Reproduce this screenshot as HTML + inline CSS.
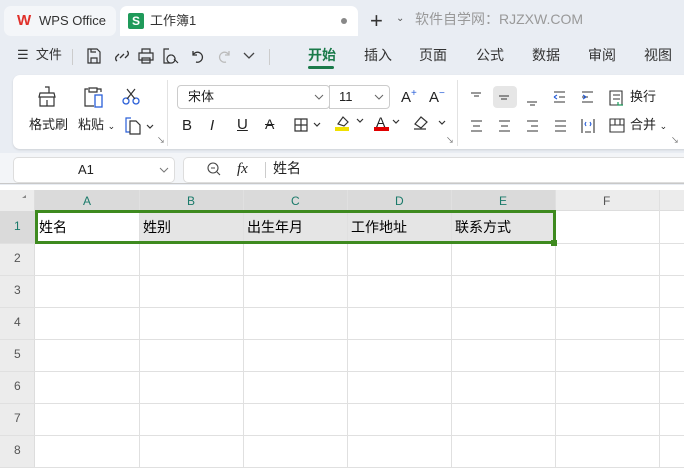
<!DOCTYPE html>
<html><head><meta charset="utf-8"><style>
*{margin:0;padding:0;box-sizing:border-box}
body{width:684px;height:468px;overflow:hidden;background:#e9edf3;font-family:"Liberation Sans","Noto Sans CJK SC",sans-serif;position:relative;color:#222}
.a{position:absolute}
.t{font-size:13px;white-space:nowrap;line-height:1.2}
svg{position:absolute;overflow:visible}
</style></head><body>
<!-- tabs -->
<div class="a" style="left:4px;top:6px;width:112px;height:30px;background:#f4f6f9;border-radius:7px"></div>
<div class="a t" style="left:17px;top:12px;color:#e0302a;font-weight:bold;font-size:15px">W</div>
<div class="a t" style="left:39px;top:13px;font-size:13px;color:#333">WPS Office</div>
<div class="a" style="left:120px;top:6px;width:238px;height:30px;background:#fff;border-radius:7px 7px 0 0"></div>
<div class="a" style="left:128px;top:13px;width:16px;height:16px;background:#1f9a5a;border-radius:2px;color:#fff;font-size:12px;font-weight:bold;text-align:center;line-height:16px">S</div>
<div class="a t" style="left:150px;top:13px;color:#333">工作簿1</div>
<div class="a" style="left:341px;top:18px;width:6px;height:6px;border-radius:3px;background:#888"></div>
<div class="a t" style="left:370px;top:8px;font-size:22px;color:#333;font-weight:300">+</div>
<div class="a t" style="left:396px;top:13px;font-size:10px;color:#555">⌄</div>
<div class="a t" style="left:415px;top:11px;font-size:14px;color:#999">软件自学网：RJZXW.COM</div>
<!-- menu row -->
<div class="a t" style="left:17px;top:47px;color:#333">☰&nbsp; 文件</div>
<div class="a" style="left:72px;top:49px;width:1px;height:16px;background:#ccc"></div>
<svg style="left:86px;top:48px" width="16" height="16"><path d="M2 1h9l3 3v11H2z M5 15v-5h6v5 M5 1v3h5" fill="none" stroke="#333" stroke-width="1.2"/></svg>
<svg style="left:114px;top:48px" width="16" height="16"><path d="M3 13a3 3 0 0 1 0-5l2-2 M13 3a3 3 0 0 1 0 5l-2 2 M6 10l4-4" fill="none" stroke="#333" stroke-width="1.3"/></svg>
<svg style="left:138px;top:48px" width="16" height="16"><path d="M4 5V1h8v4 M1 5h14v7H1z M4 10h8v5H4z" fill="none" stroke="#333" stroke-width="1.2"/></svg>
<svg style="left:163px;top:48px" width="16" height="16"><path d="M6 1H1v14h6 M8 7a4 4 0 1 0 0.1 0 M11 11l4 4" fill="none" stroke="#333" stroke-width="1.2"/></svg>
<svg style="left:190px;top:48px" width="16" height="16"><path d="M3 3v4h4 M3 7a5 5 0 1 1 3 7" fill="none" stroke="#333" stroke-width="1.3"/></svg>
<svg style="left:216px;top:48px" width="16" height="16"><path d="M13 3v4H9 M13 7a5 5 0 1 0-3 7" fill="none" stroke="#bbb" stroke-width="1.3"/></svg>
<svg style="left:243px;top:50px" width="12" height="10"><path d="M1 3l5 5 5-5" fill="none" stroke="#444" stroke-width="1.3"/></svg>
<div class="a" style="left:269px;top:49px;width:1px;height:16px;background:#ccc"></div>
<div class="a t" style="left:308px;top:47px;color:#1a7a4a;font-weight:bold;font-size:14px">开始</div>
<div class="a" style="left:308px;top:66px;width:26px;height:3px;background:#1a7a4a;border-radius:2px"></div>
<div class="a t" style="left:364px;top:47px;color:#333;font-size:14px">插入</div>
<div class="a t" style="left:419px;top:47px;color:#333;font-size:14px">页面</div>
<div class="a t" style="left:476px;top:47px;color:#333;font-size:14px">公式</div>
<div class="a t" style="left:532px;top:47px;color:#333;font-size:14px">数据</div>
<div class="a t" style="left:588px;top:47px;color:#333;font-size:14px">审阅</div>
<div class="a t" style="left:644px;top:47px;color:#333;font-size:14px">视图</div>
<!-- ribbon -->
<div class="a" style="left:13px;top:75px;width:680px;height:74px;background:#fff;border-radius:7px;box-shadow:0 1px 2px rgba(0,0,0,.12)"></div>
<svg style="left:36px;top:86px" width="22" height="22"><path d="M9 1h4v6 M4 7h14l1 4H3z M4 11v9h14v-9 M11 14v6" fill="none" stroke="#333" stroke-width="1.2"/></svg>
<div class="a t" style="left:29px;top:117px">格式刷</div>
<svg style="left:83px;top:86px" width="24" height="22"><path d="M5 3H2v17h9 M14 3h4v3 M6 2h8v4H6z" fill="none" stroke="#333" stroke-width="1.2"/><rect x="12" y="9" width="7" height="12" fill="none" stroke="#2a5fd8" stroke-width="1.3"/></svg>
<div class="a t" style="left:78px;top:117px">粘贴 <span style="font-size:9px">⌄</span></div>
<svg style="left:122px;top:88px" width="18" height="18"><circle cx="4" cy="13" r="3" fill="none" stroke="#2a5fd8" stroke-width="1.3"/><circle cx="14" cy="13" r="3" fill="none" stroke="#2a5fd8" stroke-width="1.3"/><path d="M5 11L13 1 M13 11L5 1" stroke="#333" stroke-width="1.2"/></svg>
<svg style="left:125px;top:116px" width="30" height="20"><path d="M6 2H1v14h4" fill="none" stroke="#2a5fd8" stroke-width="1.2"/><path d="M5 5h6l4 4v9H5z" fill="none" stroke="#333" stroke-width="1.2"/><path d="M22 9l3 3 3-3" fill="none" stroke="#333" stroke-width="1.2"/></svg>
<div class="a" style="left:167px;top:80px;width:1px;height:66px;background:#e2e2e2"></div>
<div class="a" style="left:177px;top:85px;width:153px;height:24px;border:1px solid #ccc;border-radius:4px"></div>
<div class="a t" style="left:188px;top:89px">宋体</div>
<svg style="left:314px;top:94px" width="10" height="6"><path d="M1 1l4 4 4-4" fill="none" stroke="#666"/></svg>
<div class="a" style="left:329px;top:85px;width:61px;height:24px;border:1px solid #ccc;border-radius:0 4px 4px 0"></div>
<div class="a t" style="left:339px;top:89px">11</div>
<svg style="left:374px;top:94px" width="10" height="6"><path d="M1 1l4 4 4-4" fill="none" stroke="#666"/></svg>
<div class="a t" style="left:401px;top:88px;font-size:15px">A<sup style="font-size:10px;color:#2a5fd8">+</sup></div>
<div class="a t" style="left:429px;top:88px;font-size:15px">A<sup style="font-size:10px;color:#2a5fd8">−</sup></div>
<div class="a t" style="left:182px;top:117px;font-size:15px">B</div>
<div class="a t" style="left:210px;top:117px;font-size:15px;font-style:italic">I</div>
<div class="a t" style="left:237px;top:116px;font-size:15px;text-decoration:underline">U</div>
<div class="a t" style="left:265px;top:116px;font-size:14px;text-decoration:line-through">A</div>
<svg style="left:294px;top:118px" width="30" height="14"><path d="M1 1h12v12H1z M7 1v12 M1 7h12 M20 5l3 3 3-3" fill="none" stroke="#333" stroke-width="1.2"/></svg>
<div class="a" style="left:335px;top:127px;width:14px;height:4px;background:#f0e000"></div>
<svg style="left:336px;top:114px" width="30" height="14"><path d="M2 10l5-7 5 5-4 4z M21 5l3 3 3-3" fill="none" stroke="#333" stroke-width="1.2"/></svg>
<div class="a t" style="left:376px;top:114px;font-size:14px">A</div>
<div class="a" style="left:374px;top:127px;width:15px;height:4px;background:#e00000"></div>
<svg style="left:392px;top:119px" width="10" height="6"><path d="M1 1l3 3 3-3" fill="none" stroke="#333" stroke-width="1.2"/></svg>
<svg style="left:413px;top:115px" width="32" height="16"><path d="M2 9l6-7 6 5-6 6z M1 14h12 M26 6l3 3 3-3" fill="none" stroke="#333" stroke-width="1.2"/></svg>
<div class="a" style="left:457px;top:80px;width:1px;height:66px;background:#e2e2e2"></div>
<div class="a" style="left:493px;top:86px;width:24px;height:22px;background:#e6e6e6;border-radius:4px"></div>
<svg style="left:468px;top:90px" width="210" height="46" stroke="#333" stroke-width="1.1" fill="none">
<path d="M3 3h10 M6 6h5"/><path d="M31 6h10 M33 9h6"/><path d="M59 12h10 M62 15h5"/>
<path d="M86 2h11 M86 12h11 M91 7h6" /><path d="M86 7l3-2 M86 7l3 2" stroke="#2a5fd8"/>
<path d="M114 2h11 M114 12h11 M114 7h6"/><path d="M118 7l-3-2 M118 7l-3 2" stroke="#2a5fd8"/>
<path d="M142 1h12v14h-12z M145 5h7 M145 9h7"/>
<path d="M3 31h11 M5 36h7 M3 41h11"/><path d="M31 31h11 M33 36h7 M31 41h11"/><path d="M59 31h11 M63 36h7 M59 41h11"/><path d="M87 31h11 M87 36h11 M87 41h11"/>
<path d="M114 29v14 M126 29v14 M117 42h6"/><path d="M118 32l-1 2 1 2 M122 32l1 2-1 2" stroke="#2a5fd8"/>
<path d="M142 29h14v13h-14z M142 35h14 M147 29v6 M152 29v6"/>
</svg>
<svg style="left:617px;top:101px" width="8" height="6"><path d="M1 1v3h5" fill="none" stroke="#1a9a5a" stroke-width="1.2"/></svg>
<div class="a t" style="left:630px;top:89px">换行</div>
<div class="a t" style="left:630px;top:117px">合并 <span style="font-size:9px">⌄</span></div>
<div class="a t" style="left:157px;top:136px;font-size:8px;color:#666">↘</div>
<div class="a t" style="left:446px;top:136px;font-size:8px;color:#666">↘</div>
<div class="a t" style="left:671px;top:136px;font-size:8px;color:#666">↘</div>
<!-- formula bar -->
<div class="a" style="left:0;top:153px;width:684px;height:31px;background:#f3f5f8;border-bottom:1px solid #c8c8c8"></div>
<div class="a" style="left:13px;top:157px;width:162px;height:26px;background:#fff;border:1px solid #ddd;border-radius:5px"></div>
<div class="a t" style="left:78px;top:162px">A1</div>
<svg style="left:159px;top:167px" width="10" height="6"><path d="M1 1l4 4 4-4" fill="none" stroke="#777"/></svg>
<div class="a" style="left:183px;top:157px;width:510px;height:26px;background:#fff;border:1px solid #ddd;border-radius:5px"></div>
<svg style="left:207px;top:162px" width="14" height="14"><circle cx="6" cy="6" r="5" fill="none" stroke="#444" stroke-width="1.1"/><path d="M4 6h4 M10 10l3 3" stroke="#444" stroke-width="1.1"/></svg>
<div class="a t" style="left:237px;top:160px;font-family:'Liberation Serif',serif;font-style:italic;font-size:15px">fx</div>
<div class="a" style="left:265px;top:162px;width:1px;height:16px;background:#ccc"></div>
<div class="a t" style="left:273px;top:160px;font-size:14px">姓名</div>
<!-- grid -->
<div class="a" style="left:0;top:185px;width:684px;height:283px;background:#fff"></div>
<div class="a" style="left:0;top:190px;width:684px;height:21px;background:#ececec;border-bottom:1px solid #ddd"></div>
<div class="a" style="left:35px;top:190px;width:521px;height:21px;background:#dadada"></div>
<div class="a" style="left:0;top:190px;width:35px;height:278px;background:#ececec;border-right:1px solid #ddd"></div>
<div class="a" style="left:0;top:211px;width:35px;height:32px;background:#dadada"></div>
<div class="a" style="left:139px;top:211px;width:417px;height:32px;background:#e5e5e5"></div>
<svg style="left:0;top:190px" width="684" height="278">
<g stroke="#e0e0e0" stroke-width="1">
<path d="M139.5 0V278 M243.5 0V278 M347.5 0V278 M451.5 0V278 M555.5 0V278 M659.5 0V278"/>
<path d="M0 53.5H684 M0 85.5H684 M0 117.5H684 M0 149.5H684 M0 181.5H684 M0 213.5H684 M0 245.5H684 M0 277.5H684"/>
</g>
<path d="M22 8l4-3v3z" fill="#888"/>
</svg>
<div class="a" style="left:35px;top:210px;width:521px;height:34px;border:3px solid #3e8a1f"></div>
<div class="a" style="left:551px;top:240px;width:6px;height:6px;background:#3e8a1f"></div>
<div class="a t" style="left:83px;top:194px;font-size:12px;color:#1a7a6a">A</div>
<div class="a t" style="left:187px;top:194px;font-size:12px;color:#1a7a6a">B</div>
<div class="a t" style="left:291px;top:194px;font-size:12px;color:#1a7a6a">C</div>
<div class="a t" style="left:395px;top:194px;font-size:12px;color:#1a7a6a">D</div>
<div class="a t" style="left:499px;top:194px;font-size:12px;color:#1a7a6a">E</div>
<div class="a t" style="left:603px;top:194px;font-size:12px;color:#555">F</div>
<div class="a t" style="left:14px;top:219px;font-size:12px;color:#1a7a6a">1</div>
<div class="a t" style="left:14px;top:251px;font-size:12px;color:#555">2</div>
<div class="a t" style="left:14px;top:283px;font-size:12px;color:#555">3</div>
<div class="a t" style="left:14px;top:315px;font-size:12px;color:#555">4</div>
<div class="a t" style="left:14px;top:347px;font-size:12px;color:#555">5</div>
<div class="a t" style="left:14px;top:379px;font-size:12px;color:#555">6</div>
<div class="a t" style="left:14px;top:411px;font-size:12px;color:#555">7</div>
<div class="a t" style="left:14px;top:443px;font-size:12px;color:#555">8</div>
<div class="a t" style="left:39px;top:219px;font-size:14px;color:#000">姓名</div>
<div class="a t" style="left:143px;top:219px;font-size:14px;color:#000">姓别</div>
<div class="a t" style="left:247px;top:219px;font-size:14px;color:#000">出生年月</div>
<div class="a t" style="left:351px;top:219px;font-size:14px;color:#000">工作地址</div>
<div class="a t" style="left:455px;top:219px;font-size:14px;color:#000">联系方式</div>
</body></html>
